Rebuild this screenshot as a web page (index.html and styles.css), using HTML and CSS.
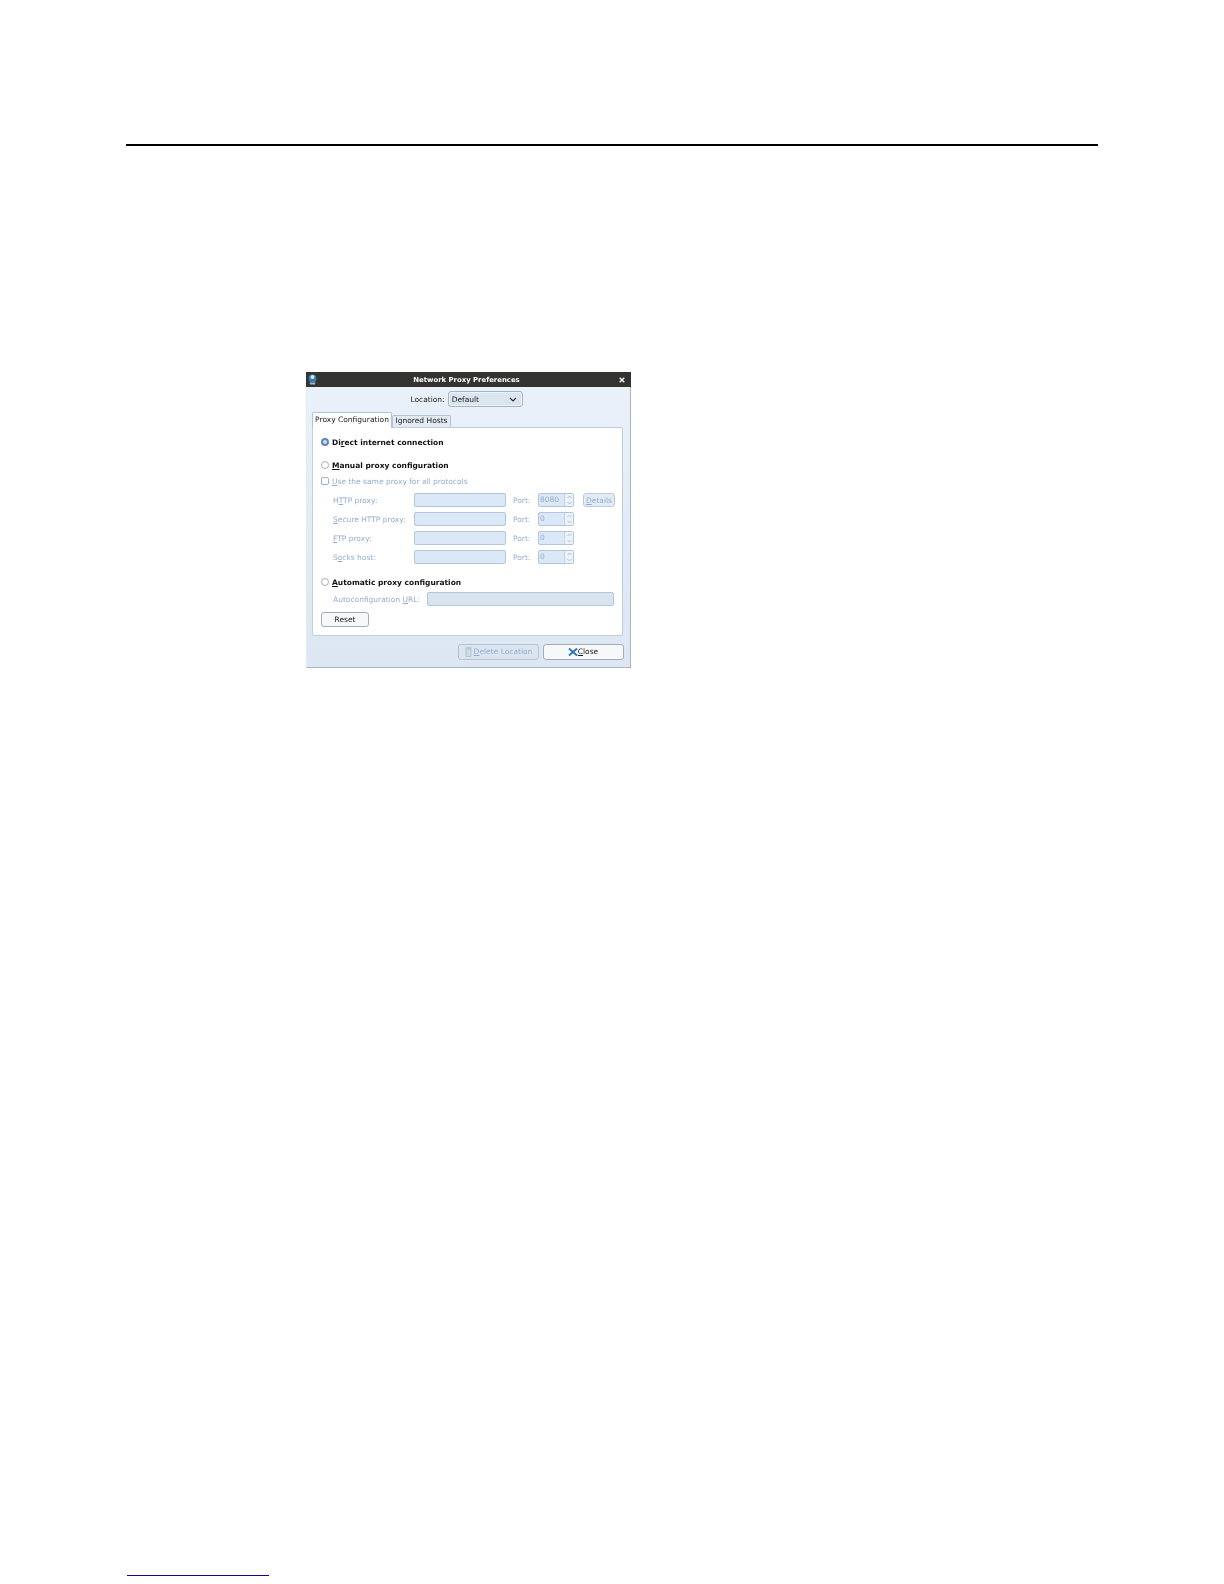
FILE: index.html
```html
<!DOCTYPE html>
<html lang="en">
<head>
  <meta charset="UTF-8">
  <title>Network Proxy Preferences</title>
  <link rel="stylesheet" href="styles.css">
</head>
<body>
  <div class="page">
    <div class="top-rule"></div>

    <!-- Dialog screenshot -->
    <div class="window">
      <div class="titlebar">
        <svg class="app-icon" width="9" height="11" viewBox="0 0 9 11">
          <circle cx="4.5" cy="4.5" r="4" fill="#2f7fb5"/>
          <circle cx="4.5" cy="3" r="2" fill="#d5e6f0"/>
          <path d="M1.5 8.5h6L7 10.5H2z" fill="#a9b6bc"/>
        </svg>
        <span class="title">Network Proxy Preferences</span>
        <svg class="close-x" width="6" height="6" viewBox="0 0 6 6">
          <path d="M.7.7l4.6 4.6M5.3.7L.7 5.3" stroke="#fff" stroke-width="1.3"/>
        </svg>
      </div>

      <div class="location-row">
        <span>Location:</span>
        <div class="select">
          <span>Default</span>
          <svg width="8" height="5" viewBox="0 0 8 5">
            <path d="M1 1l3 3 3-3" fill="none" stroke="#333" stroke-width="1.2"/>
          </svg>
        </div>
      </div>

      <div class="tabs">
        <div class="tab active">Proxy Configuration</div>
        <div class="tab second">Ignored Hosts</div>
      </div>

      <div class="panel">
        <div class="option first">
          <span class="radio checked"></span>
          <b>Di<u>r</u>ect internet connection</b>
        </div>
        <div class="option manual">
          <span class="radio"></span>
          <b><u>M</u>anual proxy configuration</b>
        </div>
        <div class="option same muted">
          <span class="check"></span>
          <span><u>U</u>se the same proxy for all protocols</span>
        </div>

        <div class="proxy-grid muted">
          <span>H<u>T</u>TP proxy:</span>
          <div class="input"></div>
          <span>Port:</span>
          <div class="spin">
            <span class="spin-val">8080</span>
            <span class="spin-btns">
              <svg width="5" height="4" viewBox="0 0 5 4"><path d="M.5 3L2.5 1l2 2" fill="none" stroke="#9db4d0" stroke-width=".8"/></svg>
              <svg width="5" height="4" viewBox="0 0 5 4"><path d="M.5 1l2 2 2-2" fill="none" stroke="#9db4d0" stroke-width=".8"/></svg>
            </span>
          </div>
          <div class="btn small"><span><u>D</u>etails</span></div>

          <span><u>S</u>ecure HTTP proxy:</span>
          <div class="input"></div>
          <span>Port:</span>
          <div class="spin">
            <span class="spin-val">0</span>
            <span class="spin-btns">
              <svg width="5" height="4" viewBox="0 0 5 4"><path d="M.5 3L2.5 1l2 2" fill="none" stroke="#9db4d0" stroke-width=".8"/></svg>
              <svg width="5" height="4" viewBox="0 0 5 4"><path d="M.5 1l2 2 2-2" fill="none" stroke="#9db4d0" stroke-width=".8"/></svg>
            </span>
          </div>
          <span></span>

          <span><u>F</u>TP proxy:</span>
          <div class="input"></div>
          <span>Port:</span>
          <div class="spin">
            <span class="spin-val">0</span>
            <span class="spin-btns">
              <svg width="5" height="4" viewBox="0 0 5 4"><path d="M.5 3L2.5 1l2 2" fill="none" stroke="#9db4d0" stroke-width=".8"/></svg>
              <svg width="5" height="4" viewBox="0 0 5 4"><path d="M.5 1l2 2 2-2" fill="none" stroke="#9db4d0" stroke-width=".8"/></svg>
            </span>
          </div>
          <span></span>

          <span>S<u>o</u>cks host:</span>
          <div class="input"></div>
          <span>Port:</span>
          <div class="spin">
            <span class="spin-val">0</span>
            <span class="spin-btns">
              <svg width="5" height="4" viewBox="0 0 5 4"><path d="M.5 3L2.5 1l2 2" fill="none" stroke="#9db4d0" stroke-width=".8"/></svg>
              <svg width="5" height="4" viewBox="0 0 5 4"><path d="M.5 1l2 2 2-2" fill="none" stroke="#9db4d0" stroke-width=".8"/></svg>
            </span>
          </div>
          <span></span>
        </div>

        <div class="option auto">
          <span class="radio"></span>
          <b><u>A</u>utomatic proxy configuration</b>
        </div>
        <div class="url-row muted">
          <span>Autoconfiguration <u>U</u>RL:</span>
          <div class="input url"></div>
        </div>
        <div class="btn reset"><span>Reset</span></div>
      </div>

      <div class="actions">
        <div class="btn delete muted">
          <svg width="7" height="10" viewBox="0 0 7 10">
            <path d="M1 2h5v7.5H1zM0 1h7M2.5 .5h2" fill="#cfdbe8" stroke="#a9bcd2" stroke-width=".8"/>
          </svg>
          <span><u>D</u>elete Location</span>
        </div>
        <div class="btn close">
          <svg width="10" height="8" viewBox="0 0 10 8">
            <path d="M1 .5l8 7M9 .5l-8 7" stroke="#2b6fb3" stroke-width="1.8"/>
          </svg>
          <span><u>C</u>lose</span>
        </div>
      </div>
    </div>

    <div class="bottom-rule"></div>
  </div>
</body>
</html>
```

FILE: styles.css
```css
body {
  margin: 0;
  background-color: #ffffff;
  font-family: "DejaVu Sans", sans-serif;
}

.page {
  padding: 144px 126px 0 126px;
}

.top-rule {
  height: 2px;
  background-color: #000000;
}

.bottom-rule {
  width: 142px;
  height: 1px;
  margin: 907px 0 0 1px;
  background-color: #0a0a8c;
}

.window {
  width: 325px;
  height: 296px;
  margin: 226px 0 0 180px;
  background: linear-gradient(#eaf1f9, #dce7f3);
  font-size: 7.5px;
  color: #222222;
  display: flex;
  flex-direction: column;
  box-sizing: border-box;
  border-right: 1px solid #a9b4c0;
  border-bottom: 1px solid #a9b4c0;
  border-left: 1px solid #e2ebf5;
  filter: blur(0.3px);
}

.titlebar {
  height: 15px;
  flex: none;
  margin: 0 -1px;
  padding: 0 6px 0 2px;
  background-color: #33332f;
  color: #ffffff;
  font-weight: bold;
  display: flex;
  align-items: center;
  justify-content: space-between;
}

.title {
  font-size: 6.9px;
  margin-right: 3px;
}

.location-row {
  display: flex;
  justify-content: center;
  align-items: center;
  gap: 3px;
  height: 16px;
  margin-top: 4px;
  padding-right: 4px;
}

.select {
  width: 75px;
  height: 16px;
  box-sizing: border-box;
  padding: 0 5px 0 3px;
  border: 1px solid #a5b4c4;
  border-radius: 3px;
  background-color: #dbe5f0;
  box-shadow: 0 0 0 1px #eef3f9 inset;
  display: flex;
  align-items: center;
  justify-content: space-between;
}

.tabs {
  display: flex;
  align-items: flex-end;
  height: 15px;
  margin: 5px 0 0 5px;
}

.tab {
  height: 12px;
  box-sizing: border-box;
  line-height: 9px;
  text-align: center;
  border: 1px solid #b4c3d3;
  border-bottom: none;
  border-radius: 2px 2px 0 0;
  background-color: #e2eaf4;
}

.tab.second {
  width: 59px;
}

.tab.active {
  width: 80px;
  height: 16px;
  line-height: 14px;
  background-color: #ffffff;
  position: relative;
  z-index: 1;
  margin-bottom: -1px;
}

.panel {
  width: 311px;
  height: 209px;
  box-sizing: border-box;
  margin-left: 5px;
  padding: 0 8px;
  background-color: #ffffff;
  border: 1px solid #c0cedc;
  border-radius: 2px;
  flex: none;
}

.option {
  display: flex;
  align-items: center;
  gap: 3px;
  height: 12px;
  font-size: 7.5px;
  color: #111111;
}

.option.first {
  margin-top: 8px;
}

.option.manual {
  margin-top: 11px;
}

.option.same {
  margin-top: 4px;
}

.option.auto {
  margin-top: 12px;
}

.muted,
.option.muted {
  color: #93add0;
}

.radio,
.check {
  width: 8px;
  height: 8px;
  flex: none;
  box-sizing: border-box;
  border: 1px solid #a3afba;
  background-color: #ffffff;
  border-radius: 50%;
}

.check {
  border-radius: 2px;
}

.radio.checked {
  border: 2.5px solid #5f88b5;
  background-color: #cfdbe8;
}

.proxy-grid {
  display: grid;
  grid-template-columns: 81px 92px 32px 36px 41px;
  grid-auto-rows: 14px;
  row-gap: 5px;
  align-items: center;
  margin: 6px 0 0 12px;
}

.proxy-grid > span:nth-child(5n+3) {
  padding-left: 7px;
}

.input {
  height: 14px;
  box-sizing: border-box;
  background-color: #dbe8f7;
  border: 1px solid #b3c6dc;
  border-radius: 2px;
}

.spin {
  height: 14px;
  box-sizing: border-box;
  display: flex;
  justify-content: space-between;
  background-color: #dbe8f7;
  border: 1px solid #b3c6dc;
  border-radius: 2px;
}

.spin-val {
  padding-left: 1px;
  line-height: 12px;
}

.spin-btns {
  width: 8px;
  background-color: #edf2f8;
  border-left: 1px solid #c3d1e0;
  display: flex;
  flex-direction: column;
  align-items: center;
  justify-content: space-around;
}

.btn {
  box-sizing: border-box;
  border: 1px solid #a3aeba;
  border-radius: 3px;
  background-color: #f7f8fa;
  display: flex;
  align-items: center;
  justify-content: center;
  gap: 2px;
}

.btn.small {
  width: 32px;
  height: 14px;
  margin-left: 9px;
  color: #93add0;
  background-color: #e3ebf4;
  border-color: #bccada;
}

.url-row {
  display: flex;
  align-items: center;
  margin: 4px 0 0 12px;
  height: 14px;
}

.url-row span {
  width: 94px;
  flex: none;
}

.input.url {
  width: 188px;
  background-color: #d8e4f0;
}

.btn.reset {
  width: 48px;
  height: 15px;
  margin-top: 6px;
  color: #222222;
}

.actions {
  display: flex;
  justify-content: flex-start;
  gap: 4px;
  margin: 8px 0 0 151px;
}

.btn.delete {
  width: 81px;
  height: 16px;
  padding-bottom: 1px;
  background-color: #dbe5f0;
  border-color: #b4c3d3;
  color: #93add0;
}

.btn.close {
  width: 81px;
  height: 16px;
  gap: 0;
  padding: 0 1px 1px 0;
  color: #222222;
}
```
